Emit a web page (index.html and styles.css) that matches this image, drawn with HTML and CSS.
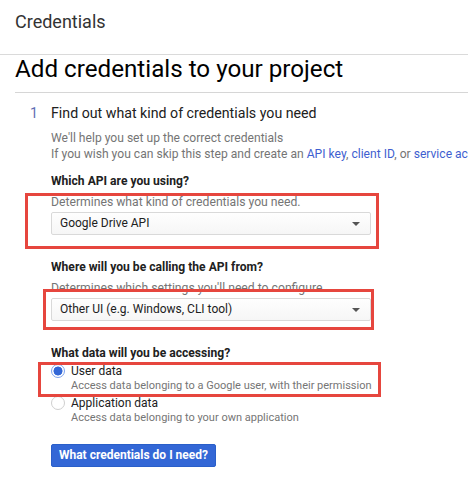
FILE: index.html
```html
<!DOCTYPE html>
<html>
<head>
<meta charset="utf-8">
<link rel="stylesheet" href="styles.css">
</head>
<body>
<header class="topbar"><span class="topbar-title">Credentials</span></header>
<main class="content">
  <h1 class="page-title">Add credentials to your project</h1>
  <section class="step">
    <div class="step-head"><span class="step-num">1</span><span class="step-title">Find out what kind of credentials you need</span></div>
    <div class="step-body">
      <p class="intro">We'll help you set up the correct credentials<br>If you wish you can skip this step and create an <a class="link">API key</a>, <a class="link">client ID</a>, or <a class="link">service account</a></p>

      <div class="field field-first">
        <div class="q">Which API are you using?</div>
        <div class="hint">Determines what kind of credentials you need.</div>
        <div class="select"><span>Google Drive API</span><span class="arrow"></span></div>
      </div>

      <div class="field">
        <div class="q">Where will you be calling the API from?</div>
        <div class="hint">Determines which settings you'll need to configure</div>
        <div class="select"><span>Other UI (e.g. Windows, CLI tool)</span><span class="arrow"></span></div>
      </div>

      <div class="field">
        <div class="q">What data will you be accessing?</div>
        <div class="radio-row first">
          <span class="radio checked"></span>
          <div class="radio-text">
            <div class="radio-label">User data</div>
            <div class="radio-desc">Access data belonging to a Google user, with their permission</div>
          </div>
        </div>
        <div class="radio-row">
          <span class="radio"></span>
          <div class="radio-text">
            <div class="radio-label">Application data</div>
            <div class="radio-desc">Access data belonging to your own application</div>
          </div>
        </div>
      </div>

      <button class="btn">What credentials do I need?</button>
    </div>
  </section>
</main>
<div class="mark mark-1"></div>
<div class="mark mark-2"></div>
<div class="mark mark-3"></div>
</body>
</html>
```
FILE: styles.css
```css
html, body {
  margin: 0;
  padding: 0;
  background: #fff;
}
body {
  font-family: Roboto, "Liberation Sans", Arial, sans-serif;
  color: #212121;
  width: 468px;
  height: 493px;
  overflow: hidden;
  position: relative;
}
.topbar {
  height: 42px;
  padding: 12px 0 0 15px;
  border-bottom: 1px solid #dadada;
}
.topbar-title {
  font-size: 18px;
  line-height: 20px;
  color: #333;
  display: block;
}
.content {
  margin-left: 15px;
  white-space: nowrap;
  overflow: hidden;
}
.page-title {
  margin: 0;
  font-size: 24.2px;
  line-height: 28px;
  font-weight: 400;
  color: #000;
  padding-bottom: 9px;
  border-bottom: 1px solid #d6d6d6;
}
.step {
  margin-top: 11px;
}
.step-head {
  display: flex;
  font-size: 14.2px;
  line-height: 18px;
}
.step-num {
  width: 36px;
  padding-left: 15px;
  box-sizing: border-box;
  color: #5f6fb5;
}
.step-title {
  color: #212121;
}
.step-body {
  margin-left: 36px;
  overflow: hidden;
}
.intro {
  margin: 9px 0 0;
  font-size: 12.1px;
  line-height: 15.5px;
  color: #757575;
  overflow: hidden;
}
.link {
  color: #3f5fd0;
  text-decoration: none;
}
.field {
  margin-top: 24px;
}
.field-first {
  margin-top: 11px;
}
.q {
  font-size: 12.1px;
  line-height: 16px;
  font-weight: 700;
  color: #212121;
}
.hint {
  margin-top: 5px;
  font-size: 12.2px;
  line-height: 16px;
  color: #757575;
}
.select {
  margin-top: 2px;
  height: 21px;
  box-sizing: content-box;
  border: 1px solid #d9d9d9;
  border-radius: 2px;
  background: linear-gradient(#fefefe, #f6f6f6);
  display: flex;
  align-items: center;
  justify-content: space-between;
  padding: 0 10px 0 8px;
  width: 300px;
  font-size: 12px;
  line-height: 21px;
  color: #212121;
}
.arrow {
  width: 0;
  height: 0;
  border-left: 4px solid transparent;
  border-right: 4px solid transparent;
  border-top: 4px solid #555;
}
.radio-row {
  display: flex;
  margin-top: 3px;
}
.radio-row.first {
  margin-top: 2px;
}
.radio {
  width: 12px;
  height: 12px;
  border: 1px solid #cfcfcf;
  border-radius: 50%;
  margin: 1px 6px 0 0;
  flex: none;
  box-sizing: content-box;
  background: #fff;
}
.radio.checked {
  border-color: #7ea3ee;
  background: radial-gradient(circle, #3367d6 0 4.2px, #fff 4.8px);
}
.radio-label {
  font-size: 12px;
  line-height: 16px;
  color: #212121;
}
.radio-desc {
  font-size: 11px;
  line-height: 13px;
  color: #757575;
}
.btn {
  margin-top: 20px;
  display: block;
  width: 165px;
  height: 23px;
  padding: 0;
  border: 1px solid #2a5fc9;
  border-radius: 2px;
  background: #3367d6;
  color: #fff;
  font-family: inherit;
  font-size: 12px;
  font-weight: 700;
  line-height: 21px;
  text-align: center;
}
.mark {
  position: absolute;
  border: 3px solid #e6463e;
  box-sizing: border-box;
  pointer-events: none;
}
.mark-1 { left: 25px; top: 193px; width: 354px; height: 56px; }
.mark-2 { left: 43px; top: 289px; width: 331px; height: 41px; }
.mark-3 { left: 38px; top: 362px; width: 343px; height: 35px; }
```
